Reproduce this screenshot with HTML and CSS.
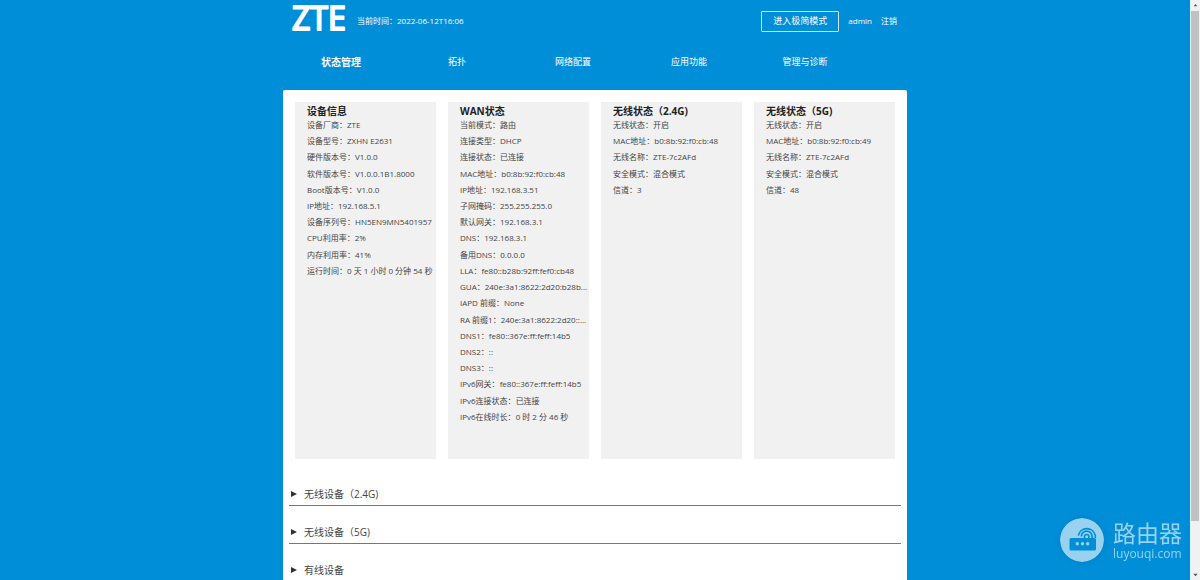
FILE: index.html
```html
<!DOCTYPE html>
<html lang="zh-CN">
<head>
<meta charset="utf-8">
<title>ZTE</title>
<link rel="stylesheet" href="styles.css">
</head>
<body>
<div class="viewport">
  <div class="page">
    <header class="header">
      <svg class="logo" viewBox="0 0 56 38" role="img" aria-label="ZTE"><text class="logo-text" x="1" y="28">ZTE</text></svg>
      <span class="time">当前时间：2022-06-12T16:06</span>
      <button class="mode" type="button">进入极简模式</button>
      <a class="user" href="#">admin</a>
      <a class="logout" href="#">注销</a>
    </header>
    <nav class="nav">
      <a class="nav-item active" href="#">状态管理</a>
      <a class="nav-item" href="#">拓扑</a>
      <a class="nav-item" href="#">网络配置</a>
      <a class="nav-item" href="#">应用功能</a>
      <a class="nav-item" href="#">管理与诊断</a>
    </nav>
    <main class="content">
      <div class="panels">
        <section class="panel">
          <h2 class="title">设备信息</h2>
          <ul class="list">
            <li class="row">设备厂商：<span class="value">ZTE</span></li>
            <li class="row">设备型号：<span class="value">ZXHN E2631</span></li>
            <li class="row">硬件版本号：<span class="value">V1.0.0</span></li>
            <li class="row">软件版本号：<span class="value">V1.0.0.1B1.8000</span></li>
            <li class="row">Boot版本号：<span class="value">V1.0.0</span></li>
            <li class="row">IP地址：<span class="value">192.168.5.1</span></li>
            <li class="row">设备序列号：<span class="value">HN5EN9MN5401957</span></li>
            <li class="row">CPU利用率：<span class="value">2%</span></li>
            <li class="row">内存利用率：<span class="value">41%</span></li>
            <li class="row">运行时间：<span class="value">0 天 1 小时 0 分钟 54 秒</span></li>
          </ul>
        </section>
        <section class="panel">
          <h2 class="title">WAN状态</h2>
          <ul class="list">
            <li class="row">当前模式：<span class="value">路由</span></li>
            <li class="row">连接类型：<span class="value">DHCP</span></li>
            <li class="row">连接状态：<span class="value">已连接</span></li>
            <li class="row">MAC地址：<span class="value">b0:8b:92:f0:cb:48</span></li>
            <li class="row">IP地址：<span class="value">192.168.3.51</span></li>
            <li class="row">子网掩码：<span class="value">255.255.255.0</span></li>
            <li class="row">默认网关：<span class="value">192.168.3.1</span></li>
            <li class="row">DNS：<span class="value">192.168.3.1</span></li>
            <li class="row">备用DNS：<span class="value">0.0.0.0</span></li>
            <li class="row">LLA：<span class="value">fe80::b28b:92ff:fef0:cb48</span></li>
            <li class="row">GUA：<span class="value">240e:3a1:8622:2d20:b28b...</span></li>
            <li class="row">IAPD 前缀：<span class="value">None</span></li>
            <li class="row">RA 前缀1：<span class="value">240e:3a1:8622:2d20::...</span></li>
            <li class="row">DNS1：<span class="value">fe80::367e:ff:feff:14b5</span></li>
            <li class="row">DNS2：<span class="value">::</span></li>
            <li class="row">DNS3：<span class="value">::</span></li>
            <li class="row">IPv6网关：<span class="value">fe80::367e:ff:feff:14b5</span></li>
            <li class="row">IPv6连接状态：<span class="value">已连接</span></li>
            <li class="row">IPv6在线时长：<span class="value">0 时 2 分 46 秒</span></li>
          </ul>
        </section>
        <section class="panel">
          <h2 class="title">无线状态（2.4G)</h2>
          <ul class="list">
            <li class="row">无线状态：<span class="value">开启</span></li>
            <li class="row">MAC地址：<span class="value">b0:8b:92:f0:cb:48</span></li>
            <li class="row">无线名称：<span class="value">ZTE-7c2AFd</span></li>
            <li class="row">安全模式：<span class="value">混合模式</span></li>
            <li class="row">信道：<span class="value">3</span></li>
          </ul>
        </section>
        <section class="panel">
          <h2 class="title">无线状态（5G)</h2>
          <ul class="list">
            <li class="row">无线状态：<span class="value">开启</span></li>
            <li class="row">MAC地址：<span class="value">b0:8b:92:f0:cb:49</span></li>
            <li class="row">无线名称：<span class="value">ZTE-7c2AFd</span></li>
            <li class="row">安全模式：<span class="value">混合模式</span></li>
            <li class="row">信道：<span class="value">48</span></li>
          </ul>
        </section>
      </div>
      <details class="group"><summary class="summary">无线设备（2.4G)</summary></details>
      <details class="group"><summary class="summary">无线设备（5G)</summary></details>
      <details class="group"><summary class="summary">有线设备</summary></details>
    </main>
  </div>
  <div class="scrollbar">
    <svg class="arrow" viewBox="0 0 10 10"><path d="M3 6.500L5 4l2 2.500z"/></svg>
    <div class="thumb"></div>
    <svg class="arrow" viewBox="0 0 10 10"><path d="M2.500 3.500h5L5 6.500z"/></svg>
  </div>
</div>
<div class="watermark">
  <svg class="router" viewBox="0 0 44 44">
    <circle cx="22" cy="22" r="22" fill="#99d2ef"/>
    <rect x="9.500" y="20" width="26.500" height="12.500" rx="1.500" fill="#008ed8"/>
    <g fill="none" stroke="#008ed8" stroke-width="1.700">
      <path d="M18.300 17.500a8.700 8.700 0 0 1 17 0V20"/>
      <path d="M21.300 18.500a5.400 5.400 0 0 1 10.800 0V20"/>
      <path d="M24.500 20v-1.300a2.200 2.200 0 0 1 4.400 0V20"/>
    </g>
    <g fill="#99d2ef"><circle cx="17.300" cy="25.700" r="1.700"/><circle cx="22.500" cy="25.700" r="1.700"/><circle cx="27.700" cy="25.700" r="1.700"/></g>
  </svg>
  <div class="brand"><div class="brand-name">路由器</div><div class="brand-url">luyouqi.com</div></div>
</div>
</body>
</html>
```
FILE: styles.css
```css
* { box-sizing: border-box; }
body {
  margin: 0;
  background: #008ed8;
  color: #444;
  font: 8px/16px "Open Sans", "Noto Sans CJK SC", sans-serif;
}
a { color: inherit; text-decoration: none; }
.viewport { display: flex; height: 100vh; overflow: hidden; }
.page { flex: 1; padding: 0 16px; }
.header, .nav, .content { max-width: 624px; margin: 0 auto; }
.header {
  display: flex;
  align-items: center;
  height: 42px;
  padding: 0 10px 0 8px;
  color: #fff;
}
.logo { width: 56px; height: 38px; overflow: visible; }
.logo-text {
  font: 400 32px "Open Sans", sans-serif;
  fill: #fff;
  stroke: #fff;
  stroke-width: 2;
  stroke-linejoin: round;
}
.time { margin-left: 10px; }
.mode {
  height: 21px;
  margin-left: auto;
  padding: 0 11px;
  border: 1px solid #cce8f7;
  border-radius: 1px;
  background: none;
  color: #fff;
  font: inherit;
  font-size: 9px;
}
.user { margin-left: 9px; }
.logout { margin-left: 9px; }
.nav {
  display: grid;
  grid-template-columns: repeat(5, 1fr);
  align-items: center;
  height: 40px;
  padding-right: 44px;
  margin-bottom: 8px;
  color: #fff;
  font-size: 9px;
  text-align: center;
}
.active { font-size: 10px; font-weight: 700; }
.content {
  min-height: 520px;
  padding: 12px 6px 0;
  border-radius: 2px 2px 0 0;
  background: #fff;
}
.panels {
  display: grid;
  grid-template-columns: repeat(4, 1fr);
  gap: 12px;
  padding: 0 6px;
  margin-bottom: 9px;
}
.panel { padding: 4px 0 34px 12px; background: #f1f1f1; }
.title { margin: 0; color: #222; font-size: 10px; line-height: 11px; font-weight: 700; }
.list {
  display: grid;
  grid-template-rows: repeat(19, 1fr);
  height: 308px;
  margin: 0;
  padding: 0;
  list-style: none;
}
.row { white-space: nowrap; }
.group { border-bottom: 1px solid #777; }
.summary {
  display: flex;
  align-items: center;
  gap: 7px;
  height: 37px;
  padding: 14px 2px 0;
  font-size: 10px;
  line-height: 16px;
}
.summary::before {
  content: "";
  border: solid transparent;
  border-width: 3px 0 3px 6px;
  border-left-color: #333;
}
.scrollbar { display: flex; flex-direction: column; width: 10px; background: #f1f1f1; border-left: 1px solid #e4f3fb; }
.arrow { width: 9px; height: 10px; fill: #555; }
.thumb { flex: 1; margin: 1px 1px 49px 0; background: #c1c1c1; }
.watermark {
  position: fixed;
  right: 18px;
  bottom: 18px;
  display: flex;
  align-items: center;
  gap: 9px;
  color: #99d2ef;
}
.router { width: 44px; height: 44px; border-radius: 50%; box-shadow: 0 0 6px #0080c4; }
.brand-name { font-size: 23px; line-height: 28px; }
.brand-url { font-size: 12px; line-height: 14px; }
```
